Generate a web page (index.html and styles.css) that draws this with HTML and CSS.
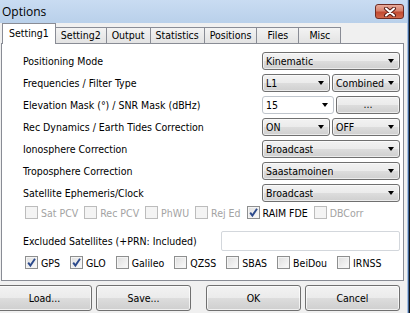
FILE: index.html
```html
<!DOCTYPE html>
<html lang="en">
<head>
  <meta charset="UTF-8">
  <title>Options</title>
  <link rel="stylesheet" href="styles.css">
</head>
<body>
  <div class="window">
    <div class="main">
      <div class="titlebar">
        <span class="title">Options</span>
        <div class="closeButton">
          <svg width="14" height="10" viewBox="0 0 14 10">
            <path d="M3 1.5 L11 8.5 M11 1.5 L3 8.5" stroke="#5a1e16" stroke-width="4" stroke-linecap="round"/>
            <path d="M3 1.5 L11 8.5 M11 1.5 L3 8.5" stroke="#ffffff" stroke-width="2" stroke-linecap="round"/>
          </svg>
        </div>
      </div>

      <div class="tabs">
        <div class="tab active">Setting1</div>
        <div class="tab">Setting2</div>
        <div class="tab">Output</div>
        <div class="tab">Statistics</div>
        <div class="tab">Positions</div>
        <div class="tab">Files</div>
        <div class="tab">Misc</div>
      </div>

      <div class="panel">
        <div class="row">
          <span class="label">Positioning Mode</span>
          <div class="controls">
            <div class="combo"><span>Kinematic</span><i class="arrow"></i></div>
          </div>
        </div>
        <div class="row">
          <span class="label">Frequencies / Filter Type</span>
          <div class="controls">
            <div class="combo"><span>L1</span><i class="arrow"></i></div>
            <div class="combo"><span>Combined</span><i class="arrow"></i></div>
          </div>
        </div>
        <div class="row">
          <span class="label">Elevation Mask (°) / SNR Mask (dBHz)</span>
          <div class="controls">
            <div class="combo editable"><span>15</span><i class="arrow"></i></div>
            <div class="pushButton">...</div>
          </div>
        </div>
        <div class="row">
          <span class="label">Rec Dynamics / Earth Tides Correction</span>
          <div class="controls">
            <div class="combo"><span>ON</span><i class="arrow"></i></div>
            <div class="combo"><span>OFF</span><i class="arrow"></i></div>
          </div>
        </div>
        <div class="row">
          <span class="label">Ionosphere Correction</span>
          <div class="controls">
            <div class="combo"><span>Broadcast</span><i class="arrow"></i></div>
          </div>
        </div>
        <div class="row">
          <span class="label">Troposphere Correction</span>
          <div class="controls">
            <div class="combo"><span>Saastamoinen</span><i class="arrow"></i></div>
          </div>
        </div>
        <div class="row">
          <span class="label">Satellite Ephemeris/Clock</span>
          <div class="controls">
            <div class="combo"><span>Broadcast</span><i class="arrow"></i></div>
          </div>
        </div>

        <div class="checks options">
          <label class="check disabled"><i class="box"></i>Sat PCV</label>
          <label class="check disabled"><i class="box"></i>Rec PCV</label>
          <label class="check disabled"><i class="box"></i>PhWU</label>
          <label class="check disabled"><i class="box"></i>Rej Ed</label>
          <label class="check checked"><i class="box"><svg width="11" height="11" viewBox="0 0 11 11"><path d="M2.2 5.6 L4.4 8.6 L9 1.8" fill="none" stroke="#2c4a8c" stroke-width="1.9"/></svg></i>RAIM FDE</label>
          <label class="check disabled"><i class="box"></i>DBCorr</label>
        </div>

        <div class="row excluded">
          <span class="label">Excluded Satellites (+PRN: Included)</span>
          <div class="edit"></div>
        </div>

        <div class="checks systems">
          <label class="check checked"><i class="box"><svg width="11" height="11" viewBox="0 0 11 11"><path d="M2.2 5.6 L4.4 8.6 L9 1.8" fill="none" stroke="#2c4a8c" stroke-width="1.9"/></svg></i>GPS</label>
          <label class="check checked"><i class="box"><svg width="11" height="11" viewBox="0 0 11 11"><path d="M2.2 5.6 L4.4 8.6 L9 1.8" fill="none" stroke="#2c4a8c" stroke-width="1.9"/></svg></i>GLO</label>
          <label class="check"><i class="box"></i>Galileo</label>
          <label class="check"><i class="box"></i>QZSS</label>
          <label class="check"><i class="box"></i>SBAS</label>
          <label class="check"><i class="box"></i>BeiDou</label>
          <label class="check"><i class="box"></i>IRNSS</label>
        </div>
      </div>

      <div class="buttonRow">
        <div class="buttonPair">
          <div class="button load">Load...</div>
          <div class="button">Save...</div>
        </div>
        <div class="buttonPair">
          <div class="button">OK</div>
          <div class="button">Cancel</div>
        </div>
      </div>
    </div>
    <div class="edge"></div>
  </div>
</body>
</html>
```

FILE: styles.css
```css
body {
  margin: 0;
  width: 410px;
  height: 313px;
  overflow: hidden;
  background-color: #f0f0f0;
  font-family: "DejaVu Sans Condensed", Tahoma, sans-serif;
  font-size: 10.5px;
  color: #000;
}

.window {
  display: flex;
  height: 313px;
}

.main {
  flex: 1;
  display: flex;
  flex-direction: column;
}

.edge {
  width: 3px;
  background: linear-gradient(to right, #a9c3e4 0, #a9c3e4 1px, #3d6192 1px, #3d6192 2px, #151515 2px);
}

/* title bar */
.titlebar {
  height: 23px;
  display: flex;
  align-items: center;
  justify-content: space-between;
  padding: 0 3px 0 2px;
  background: linear-gradient(#c9dcf2, #b9d0ea);
}

.title {
  font-family: "Open Sans", "Noto Sans", sans-serif;
  font-size: 12px;
}

.closeButton {
  width: 29px;
  height: 15px;
  box-sizing: border-box;
  display: flex;
  align-items: center;
  justify-content: center;
  border: 1px solid #6e2b22;
  border-radius: 3px;
  background: linear-gradient(#e9ab9b, #d7826d 45%, #c24a31 55%, #d0674a);
}

/* tabs */
.tabs {
  position: relative;
  z-index: 1;
  height: 20px;
  display: flex;
  align-items: flex-end;
  padding-left: 2px;
}

.tab {
  height: 15px;
  line-height: 15px;
  min-width: 31px;
  padding: 0 5px;
  text-align: center;
  border: 1px solid #898c95;
  border-bottom: none;
  border-left-width: 0;
  background: linear-gradient(#f3f3f3, #e3e3e3);
}

.tab.active {
  height: 20px;
  line-height: 18px;
  padding: 0 6px;
  margin-bottom: -1px;
  border-left-width: 1px;
  background: #fff;
}

/* page */
.panel {
  height: 238px;
  box-sizing: border-box;
  margin: 0 3px 0 1px;
  padding: 8px 3px 0 21px;
  border: 1px solid #898c95;
  background: #fff;
}

.row {
  display: flex;
  align-items: center;
  height: 18px;
  margin-bottom: 4px;
}

.label {
  flex: 1;
}

.controls {
  width: 138px;
  height: 18px;
  display: flex;
  gap: 2px;
}

.combo,
.pushButton {
  flex: 1;
  display: flex;
  align-items: center;
  justify-content: space-between;
  box-sizing: border-box;
  padding: 0 5px 0 3px;
  border: 1px solid #707070;
  border-radius: 3px;
  background: linear-gradient(#f2f2f2, #ebebeb 50%, #dddddd 50%, #cfcfcf);
  box-shadow: inset 0 0 0 1px rgba(255, 255, 255, 0.6);
  white-space: nowrap;
  overflow: hidden;
}

.combo span {
  overflow: hidden;
}

.combo.editable {
  border-color: #bfc5cc;
  background: #fff;
  box-shadow: none;
}

.pushButton {
  justify-content: center;
  padding: 0 0 3px;
}

.arrow {
  flex: none;
  width: 0;
  height: 0;
  margin-left: 3px;
  border-top: 4px solid #000;
  border-left: 3.5px solid transparent;
  border-right: 3.5px solid transparent;
}

/* check boxes */
.checks {
  display: flex;
  align-items: center;
  height: 13px;
  padding-left: 2px;
}

.checks.options {
  gap: 6px;
  margin-top: 2px;
}

.checks.systems {
  gap: 10px;
  margin-top: 5px;
}

.check {
  display: flex;
  align-items: center;
}

.box {
  width: 13px;
  height: 13px;
  box-sizing: border-box;
  margin-right: 3px;
  display: flex;
  align-items: center;
  justify-content: center;
  border: 1px solid #8e8f8f;
  background: linear-gradient(135deg, #dedede, #fbfbfb);
  box-shadow: inset 0 0 0 1px #f4f4f4;
}

.check.disabled {
  color: #a3a3a3;
}

.check.disabled .box {
  border-color: #bcbcbc;
  background: #f4f4f4;
}

.excluded {
  height: 20px;
  margin: 12px 0 0;
}

.edit {
  width: 179px;
  height: 20px;
  box-sizing: border-box;
  border: 1px solid #d3d7dc;
  border-radius: 2px;
  background: #fff;
}

/* bottom buttons */
.buttonRow {
  display: flex;
  justify-content: space-between;
  margin: 4px 7px 0 -3px;
}

.buttonPair {
  display: flex;
  gap: 4px;
}

.button {
  width: 95px;
  height: 26px;
  box-sizing: border-box;
  display: flex;
  align-items: center;
  justify-content: center;
  border: 1px solid #707070;
  border-radius: 3px;
  background: linear-gradient(#f2f2f2, #ebebeb 50%, #dddddd 50%, #cfcfcf);
  box-shadow: inset 0 0 0 1px rgba(255, 255, 255, 0.7);
}
```
